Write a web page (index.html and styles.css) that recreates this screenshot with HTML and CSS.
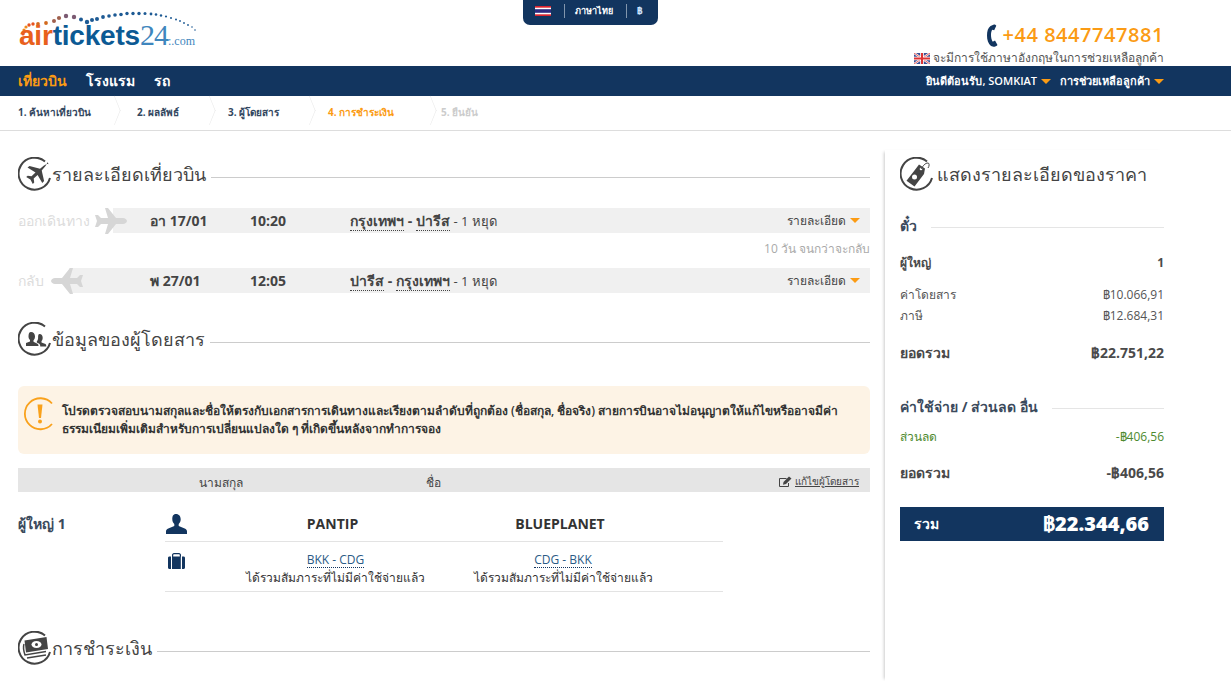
FILE: index.html
```html
<!DOCTYPE html>
<html lang="th">
<head>
<meta charset="utf-8">
<title>airtickets24</title>
<link rel="stylesheet" href="styles.css">
</head>
<body>
<header class="top">
  <a class="logo">
    <svg class="logo-dots" width="196" height="40" viewBox="0 0 196 40">
      <g fill="#f08a1d"><circle cx="6" cy="20" r="1.6"/><circle cx="8" cy="17" r="1.6"/></g>
      <g fill="#e8531f"><circle cx="11" cy="15" r="1.7"/><circle cx="5" cy="24" r="1.6"/><circle cx="15" cy="14" r="1.7"/></g>
      <g fill="#d2691e"><circle cx="20" cy="14" r="1.9"/><circle cx="28" cy="13" r="1.9"/></g>
      <g fill="#a0604d"><circle cx="36" cy="11" r="2"/><circle cx="41" cy="8" r="2.1"/></g>
      <g fill="#7b5a72"><circle cx="48" cy="6" r="2.2"/><circle cx="56" cy="7" r="2.2"/></g>
      <g fill="#1d5a94"><circle cx="63" cy="9.500" r="2"/><circle cx="69" cy="12" r="2.200"/><circle cx="74" cy="10" r="2"/><circle cx="79" cy="9" r="2"/><circle cx="85" cy="7" r="1.900"/><circle cx="91" cy="6" r="1.800"/><circle cx="97" cy="5" r="1.800"/><circle cx="103" cy="4.500" r="1.800"/><circle cx="109" cy="3.500" r="1.700"/><circle cx="115" cy="3.500" r="1.700"/><circle cx="121" cy="3.500" r="1.700"/><circle cx="127" cy="3.500" r="1.500"/><circle cx="133" cy="4" r="1.400"/><circle cx="138" cy="4.500" r="1.300"/><circle cx="143" cy="5.500" r="1.200"/><circle cx="148" cy="6.500" r="1.100"/><circle cx="153" cy="8" r="1"/><circle cx="158" cy="9.500" r="1"/><circle cx="162" cy="11" r=".9"/><circle cx="166" cy="13" r=".9"/><circle cx="170" cy="15" r=".9"/><circle cx="174" cy="17" r=".8"/><circle cx="177" cy="20" r=".8"/></g>
    </svg>
    <span class="logo-text"><span class="logo-air">air</span><span class="logo-tickets">tickets</span><span class="logo-num">24</span><span class="logo-com">:.com</span></span>
  </a>
  <div class="lang-tab">
    <svg class="flag" width="16" height="10" viewBox="0 0 16 10"><rect width="16" height="10" fill="#d9232e"/><rect y="1.700" width="16" height="6.600" fill="#fff"/><rect y="3.200" width="16" height="3.600" fill="#2d2a7f"/></svg>
    <i class="tab-sep"></i>
    <span class="lang-name">ภาษาไทย</span>
    <i class="tab-sep"></i>
    <span class="lang-cur">฿</span>
  </div>
  <div class="contact">
    <div class="phone">
      <svg width="11" height="23" viewBox="0 0 11 23"><path fill="#12355f" d="M7 .5 3.500 2C1 4 0 7 0 11.500 0 16 1.200 19.500 4 22l2.500.8c1.500 0 3.300-.8 4-1.800L8 16.500c-1 .7-1.800 1-2.500.9C4.500 15.500 4 13.500 4 11c0-2.500.4-4 1.200-5.300.7 0 1.300.2 2 .6L9.300 1.700C8.800 1 8 .5 7 .5Z"/></svg>
      <span class="phone-num">+44 8447747881</span>
    </div>
    <div class="phone-note">
      <svg width="16" height="11" viewBox="0 0 16 11"><rect width="16" height="11" fill="#3b4f93"/><path d="M0 0l16 11M16 0 0 11" stroke="#fff" stroke-width="2.200"/><path d="M0 0l16 11M16 0 0 11" stroke="#d33" stroke-width=".8"/><path d="M8 0v11M0 5.500h16" stroke="#fff" stroke-width="3.600"/><path d="M8 0v11M0 5.500h16" stroke="#d33" stroke-width="2"/></svg>
      <span>จะมีการใช้ภาษาอังกฤษในการช่วยเหลือลูกค้า</span>
    </div>
  </div>
</header>

<nav class="nav">
  <div class="nav-left">
    <a class="nav-item active">เที่ยวบิน</a>
    <a class="nav-item">โรงแรม</a>
    <a class="nav-item">รถ</a>
  </div>
  <div class="nav-right">
    <a class="nav-user">ยินดีต้อนรับ, SOMKIAT<i class="caret"></i></a>
    <a class="nav-user nav-help">การช่วยเหลือลูกค้า<i class="caret"></i></a>
  </div>
</nav>

<ol class="steps">
  <li class="step s1">1. ค้นหาเที่ยวบิน</li>
  <li class="step s2">2. ผลลัพธ์</li>
  <li class="step s3">3. ผู้โดยสาร</li>
  <li class="step s4 current">4. การชำระเงิน</li>
  <li class="step s5 disabled">5. ยืนยัน</li>
</ol>

<div class="page">
  <main class="main">
    <section class="sec sec-flight">
      <h2 class="sec-title">
        <span class="ring">
          <svg width="34" height="34" viewBox="0 0 34 34"><path class="ring-arc" d="M27 4.500A16 16 0 1 0 32 21"/><path fill="#444" d="M31 7.500c-1.300-1-3.200-.3-5 1l-4 3.200-10.500-2.700-2 1.600 8 5-4 3.700-3.800-.6-1.500 1.300 4.200 2.500 2.400 4.400 1.400-1.500-.5-3.800 3.900-3.700 4.700 8.200 1.800-2-2.400-10.500 3.400-4.100c1.300-1.700 2.400-3.500 1.900-4.600Z"/></svg>
        </span>
        <span>รายละเอียดเที่ยวบิน</span><i class="rule"></i>
      </h2>
      <div class="leg">
        <span class="leg-label">ออกเดินทาง</span>
        <svg class="leg-plane out" width="32" height="26" viewBox="0 0 32 26"><path fill="#d6d6d6" d="M10 0h3l8 10h7c2 0 4 1.500 4 3s-2 3-4 3h-7l-8 10h-3l3-10H6l-3 3H0l2-6-2-6h3l3 3h7Z"/></svg>
        <div class="leg-bar">
          <span class="leg-date">อา 17/01</span>
          <span class="leg-time">10:20</span>
          <span class="leg-route"><b class="dot">กรุงเทพฯ</b> <b>-</b> <b class="dot">ปารีส</b> <span class="stops">- 1 หยุด</span></span>
          <a class="leg-more">รายละเอียด<i class="caret"></i></a>
        </div>
      </div>
      <p class="days">10 วัน จนกว่าจะกลับ</p>
      <div class="leg">
        <span class="leg-label back">กลับ</span>
        <svg class="leg-plane in" width="32" height="26" viewBox="0 0 32 26"><path fill="#d6d6d6" d="M22 0h-3l-8 10H4c-2 0-4 1.500-4 3s2 3 4 3h7l8 10h3l-3-10h7l3 3h3l-2-6 2-6h-3l-3 3h-7Z"/></svg>
        <div class="leg-bar back">
          <span class="leg-date">พ 27/01</span>
          <span class="leg-time">12:05</span>
          <span class="leg-route"><b class="dot">ปารีส</b> <b>-</b> <b class="dot">กรุงเทพฯ</b> <span class="stops">- 1 หยุด</span></span>
          <a class="leg-more">รายละเอียด<i class="caret"></i></a>
        </div>
      </div>
    </section>

    <section class="sec sec-pax">
      <h2 class="sec-title">
        <span class="ring">
          <svg width="34" height="34" viewBox="0 0 34 34"><path class="ring-arc" d="M27 4.500A16 16 0 1 0 32 21"/><path fill="#444" d="M13 10c2.500 0 4 2 4 4.500 0 1.500-.6 3-1.500 3.800v1.400l4 2c.8.400 1 1.300 1 2.300H8v-3l4-1.500v-1.500c-1-1-1.500-2-1.500-3.500C10.500 12 11 10 13 10Z"/><path fill="#444" d="M21.500 12c2 0 3.200 1.700 3.200 3.800 0 1.500-.5 2.500-1.200 3.300v1.400l4 1.500c.6.300.8 1.500.8 2.500h-6c0-1.500-.5-2.500-2-3.200l-1.500-.8v-1c.8-1 1.300-2.200 1.300-3.800 0-1.500 0-3.700 1.400-3.700Z"/></svg>
        </span>
        <span>ข้อมูลของผู้โดยสาร</span><i class="rule"></i>
      </h2>
      <div class="notice">
        <svg class="notice-icon" width="34" height="34" viewBox="0 0 34 34"><path fill="none" stroke="#f9a11b" stroke-width="1.800" d="M29 6.500A15.500 15.500 0 1 0 29 27"/><path fill="#f9a11b" d="M14.500 7.500h5L18 21h-2Z"/><circle cx="17" cy="24.500" r="2" fill="#f9a11b"/></svg>
        <p>โปรดตรวจสอบนามสกุลและชื่อให้ตรงกับเอกสารการเดินทางและเรียงตามลำดับที่ถูกต้อง (ชื่อสกุล, ชื่อจริง) สายการบินอาจไม่อนุญาตให้แก้ไขหรืออาจมีค่าธรรมเนียมเพิ่มเติมสำหรับการเปลี่ยนแปลงใด ๆ ที่เกิดขึ้นหลังจากทำการจอง</p>
      </div>
      <div class="pax-head">
        <span class="col-a">นามสกุล</span>
        <span class="col-b">ชื่อ</span>
        <a class="edit">
          <svg width="13" height="12" viewBox="0 0 13 12"><path fill="none" stroke="#444" d="M9.500 7v3.500h-9v-8h7"/><path fill="#444" d="M4.500 6 10 .5l2.500 2L7 8l-3 .8Z"/></svg>
          <span>แก้ไขผู้โดยสาร</span>
        </a>
      </div>
      <div class="pax-body">
        <div class="pax-kind">ผู้ใหญ่ 1</div>
        <div class="pax-rows">
          <div class="pax-row names">
            <svg class="pax-icon" width="22" height="20" viewBox="0 0 22 20"><path fill="#12355f" d="M11 0c3 0 4.700 2.300 4.700 5.200 0 2-.8 3.700-2 4.800v2l6 2.500c1.500.600 2.300 1.500 2.300 3V20H1v-2.500c0-1.500.8-2.400 2.300-3l6-2.500v-2c-1.200-1.100-2-2.800-2-4.800C7.300 2.300 8 0 11 0Z"/></svg>
            <b class="col-a">PANTIP</b>
            <b class="col-b">BLUEPLANET</b>
          </div>
          <div class="pax-row bags">
            <svg class="pax-icon bag" width="17" height="16" viewBox="0 0 17 16"><path fill="#12355f" d="M1.500 3.500h1.500V16H1.500C.6 16 0 15.400 0 14.500v-9.500C0 4 .6 3.500 1.500 3.500ZM4 3.500V2c0-1 .8-2 2-2h5c1.200 0 2 1 2 2v1.500h-1.200V2c0-.4-.3-.8-.8-.8H6c-.5 0-.8.4-.8.8v1.500H12.800V16H4ZM14 3.500h1.500c.9 0 1.500.5 1.500 1.500v9.500c0 .9-.6 1.500-1.500 1.500H14Z"/></svg>
            <div class="col-a bag-col"><span class="dot-line">BKK - CDG</span><span>ได้รวมสัมภาระที่ไม่มีค่าใช้จ่ายแล้ว</span></div>
            <div class="col-b bag-col"><span class="dot-line">CDG - BKK</span><span>ได้รวมสัมภาระที่ไม่มีค่าใช้จ่ายแล้ว</span></div>
          </div>
        </div>
      </div>
    </section>

    <section class="sec sec-pay">
      <h2 class="sec-title">
        <span class="ring">
          <svg width="34" height="34" viewBox="0 0 34 34"><path class="ring-arc" d="M27 4.500A16 16 0 1 0 32 21"/><path fill="#444" d="M6.500 9.500 28.500 6l1.500 12-22 3.500Z"/><ellipse cx="18.500" cy="13.500" rx="5" ry="3.500" fill="#fff"/><circle cx="18.500" cy="13.500" r="1.500" fill="#444"/><path fill="none" stroke="#444" stroke-width="1.500" d="M6 13c-1 3 0 8 1 11l21-3.500M9 27l19-3"/></svg>
        </span>
        <span>การชำระเงิน</span><i class="rule"></i>
      </h2>
    </section>
  </main>

  <aside class="side">
    <h2 class="side-title">
      <span class="ring">
        <svg width="34" height="34" viewBox="0 0 34 34"><path class="ring-arc" d="M27 4.500A16 16 0 1 0 32 21"/><path fill="#444" d="M19 7.500l6 4-1 5.500-9.500 12.500-8-5.700L16 11.500Z"/><circle cx="21" cy="12" r="1.300" fill="#fff"/><path fill="none" stroke="#444" d="M21 12c2-3 4-6 7-6 1.500 0 1.500 3 0 5"/><circle cx="14.500" cy="20" r="2.500" fill="#fff"/></svg>
      </span>
      <span>แสดงรายละเอียดของราคา</span>
    </h2>
    <h3 class="side-head"><span>ตั๋ว</span><i class="rule light"></i></h3>
    <div class="line strong small adult"><span>ผู้ใหญ่</span><span>1</span></div>
    <div class="line fare"><span>ค่าโดยสาร</span><span>฿10.066,91</span></div>
    <div class="line tax"><span>ภาษี</span><span>฿12.684,31</span></div>
    <div class="line strong subtotal"><span>ยอดรวม</span><span>฿22.751,22</span></div>
    <h3 class="side-head extras"><span>ค่าใช้จ่าย / ส่วนลด อื่น</span><i class="rule light"></i></h3>
    <div class="line green"><span>ส่วนลด</span><span>-฿406,56</span></div>
    <div class="line strong subtotal two"><span>ยอดรวม</span><span>-฿406,56</span></div>
    <div class="total"><span>รวม</span><b>฿22.344,66</b></div>
  </aside>
</div>
</body>
</html>
```
FILE: styles.css
```css
* { box-sizing: border-box; }
html, body { margin: 0; padding: 0; height: 681px; overflow: hidden; }
body { background: #fff; color: #444; font-family: "Open Sans", "Noto Sans", sans-serif; font-size: 12px; }
a { color: inherit; }
h2, h3, p, ol { margin: 0; padding: 0; }

.top { position: relative; height: 66px; display: flex; justify-content: space-between; padding: 0 67px 0 18px; }
.logo { position: relative; display: block; width: 196px; height: 50px; margin-top: 10px; }
.logo-dots { position: absolute; left: 0; top: 0; }
.logo-text { position: absolute; left: 1px; top: 10px; white-space: nowrap; line-height: 30px; }
.logo-air, .logo-tickets { font-family: "Liberation Sans", sans-serif; font-weight: 700; font-size: 28px; letter-spacing: -.2px; }
.logo-air { color: #e8601c; }
.logo-tickets { color: #0c5a94; }
.logo-num { font-family: "Liberation Serif", serif; font-size: 30px; color: #3f86bd; letter-spacing: -1px; }
.logo-com { font-family: "Liberation Serif", serif; font-size: 12px; color: #3f86bd; }

.lang-tab { position: absolute; left: 523px; top: 0; width: 135px; height: 25px; padding: 0 0 3px 12px; display: flex; align-items: center; background: #12355f; border-radius: 0 0 7px 7px; color: #fff; }
.flag { margin-right: 13px; }
.tab-sep { width: 1px; height: 14px; background: #8296ad; }
.lang-name { font-size: 9px; font-weight: 600; margin: 0 13px 0 10px; }
.lang-cur { font-size: 9px; font-weight: 700; color: #cfe6ff; margin-left: 10px; }

.contact { display: flex; flex-direction: column; align-items: flex-end; padding-top: 24px; }
.phone { display: flex; align-items: center; gap: 4px; height: 22px; }
.phone-num { font-size: 20px; font-weight: 600; color: #fb9b14; letter-spacing: .55px; line-height: 20px; }
.phone-note { display: flex; align-items: center; gap: 3px; margin-top: 3px; font-size: 12px; line-height: 18px; color: #555; white-space: nowrap; }

.nav { height: 30px; background: #12355f; color: #fff; display: flex; justify-content: space-between; align-items: center; padding: 0 67px 0 18px; }
.nav-left { display: flex; gap: 19px; }
.nav-item { font-size: 14px; font-weight: 700; }
.nav-item.active { color: #fb9b14; }
.nav-right { display: flex; gap: 9px; }
.nav-user { font-size: 11px; font-weight: 600; display: flex; align-items: center; }
.caret { display: inline-block; width: 0; height: 0; border-left: 5px solid transparent; border-right: 5px solid transparent; border-top: 5px solid #fb9b14; margin-left: 4px; }

.steps { list-style: none; display: flex; height: 35px; border-bottom: 1px solid #ddd; font-size: 10px; font-weight: 700; color: #33475f; padding-left: 18px; align-items: center; }
.step { position: relative; white-space: nowrap; padding-bottom: 1px; }
.step::after { content: ""; position: absolute; top: -5px; right: -32px; width: 20px; height: 20px; border-top: 1px solid #e6e6e6; border-right: 1px solid #e6e6e6; transform: scaleX(.4) rotate(45deg); }
.s1 { width: 119px; }
.s2 { width: 91px; }
.s3 { width: 100px; }
.s4 { width: 113px; color: #fb9b14; }
.s5 { color: #ccc; }
.s1::after { right: 12px; }
.s2::after { right: 8px; }
.s3::after { right: 8px; }
.s4::after { right: 0; }
.s5::after { display: none; }

.page { display: flex; height: 550px; }
.main { width: 852px; margin-left: 18px; }
.sec-title, .side-title { display: flex; align-items: center; font-size: 18px; font-weight: 400; color: #444; white-space: nowrap; height: 34px; }
.ring { width: 34px; height: 34px; flex: none; }
.ring-arc { fill: none; stroke: #444; stroke-width: 2; }
.rule { flex: 1; height: 1px; background: #ccc; margin: 7px 0 0 5px; }
.rule.light { background: #e5e5e5; margin: 2px 0 0 14px; }
.sec-flight { padding-top: 26px; }
.leg { position: relative; display: flex; align-items: center; height: 25px; margin-top: 17px; }
.leg-label { font-size: 14px; color: #dcdcdc; width: 77px; }
.leg-label.back { width: 33px; }
.leg-plane { position: relative; z-index: 1; flex: none; margin-right: -14px; }
.leg-bar { flex: 1; height: 25px; background: #f0f0f0; display: flex; align-items: center; padding-left: 37px; padding-right: 10px; font-size: 14px; }
.leg-bar.back { padding-left: 81px; }
.leg-date { width: 100px; font-weight: 700; }
.leg-time { width: 100px; font-weight: 700; }
.leg-route { flex: 1; font-size: 14px; }
.dot { border-bottom: 1px dotted #444; }
.stops { font-size: 13px; }
.leg-more { font-size: 12px; display: flex; align-items: center; }
.days { text-align: right; font-size: 12px; color: #aaa; line-height: 18px; margin-top: 7px; }
.days + .leg { margin-top: 10px; }

.sec-pax { padding-top: 29px; }
.notice { display: flex; align-items: center; gap: 5px; height: 68px; margin-top: 30px; padding: 0 8px 0 5px; background: #fdf3e5; border-radius: 6px; font-weight: 600; color: #333; }
.notice-icon { flex: none; margin-bottom: 13px; }
.notice p { line-height: 18px; }
.pax-head { position: relative; display: grid; grid-template-columns: 205px 220px 1fr; height: 24px; margin-top: 14px; background: #e5e5e5; align-items: center; text-align: center; padding-left: 100px; padding-top: 5px; }
.col-a { width: 205px; text-align: center; }
.col-b { width: 220px; text-align: center; }
.pax-head .col-a { width: auto; }
.pax-head .col-b { width: auto; }
.edit { position: absolute; right: 11px; top: 6px; display: flex; align-items: center; gap: 3px; font-size: 10px; }
.edit span { text-decoration: underline; }
.pax-body { display: flex; margin-top: 20px; }
.pax-kind { width: 147px; font-size: 14px; font-weight: 700; line-height: 24px; color: #3b4a5c; }
.pax-rows { width: 558px; margin-top: 1px; }
.pax-row { display: flex; border-bottom: 1px solid #e3e3e3; }
.pax-icon { flex: none; }
.names { height: 29px; font-size: 14px; color: #333; line-height: 22px; }
.names .pax-icon { margin-right: 43px; margin-top: 1px; }
.names .col-a { margin-right: 15px; }
.bags { height: 50px; padding-top: 10px; }
.bag { margin: 1px 48px 0 3px; }
.bag-col { display: flex; flex-direction: column; align-items: center; line-height: 17px; white-space: nowrap; }
.bags .col-a { margin-right: 15px; }
.dot-line { border-bottom: 1px dotted #12355f; color: #2a5a85; line-height: 15px; }
.bag-col span:last-child { color: #333; margin-top: 1px; }
.sec-pay { padding-top: 39px; }
.sec-pay .rule { margin-left: 5px; }

.side { flex: none; width: 279px; margin-left: 15px; margin-top: 19px; padding: 7px 0 0 15px; box-shadow: -3px 0 3px -2px #ccc; }
.side-title { gap: 3px; width: 264px; }
.side-head { display: flex; align-items: center; font-size: 14px; font-weight: 700; margin-top: 25px; height: 20px; color: #3b4a5c; width: 264px; }
.side-head.extras { margin-top: 35px; }
.line { display: flex; justify-content: space-between; width: 264px; font-size: 12px; line-height: 18px; color: #555; }
.line.strong { font-weight: 700; font-size: 14px; color: #4a4a4a; }
.line.strong.small { font-size: 12px; }
.adult { margin-top: 18px; }
.fare { margin-top: 14px; }
.tax { margin-top: 3px; }
.subtotal { margin-top: 19px; }
.green { color: #4e8a2e; margin-top: 11px; }
.subtotal.two { margin-top: 18px; }
.total { display: flex; justify-content: space-between; align-items: center; width: 264px; height: 34px; margin-top: 25px; padding: 0 15px 0 14px; background: #12355f; color: #fff; font-weight: 700; font-size: 14px; }
.total b { font-size: 20px; }
```
